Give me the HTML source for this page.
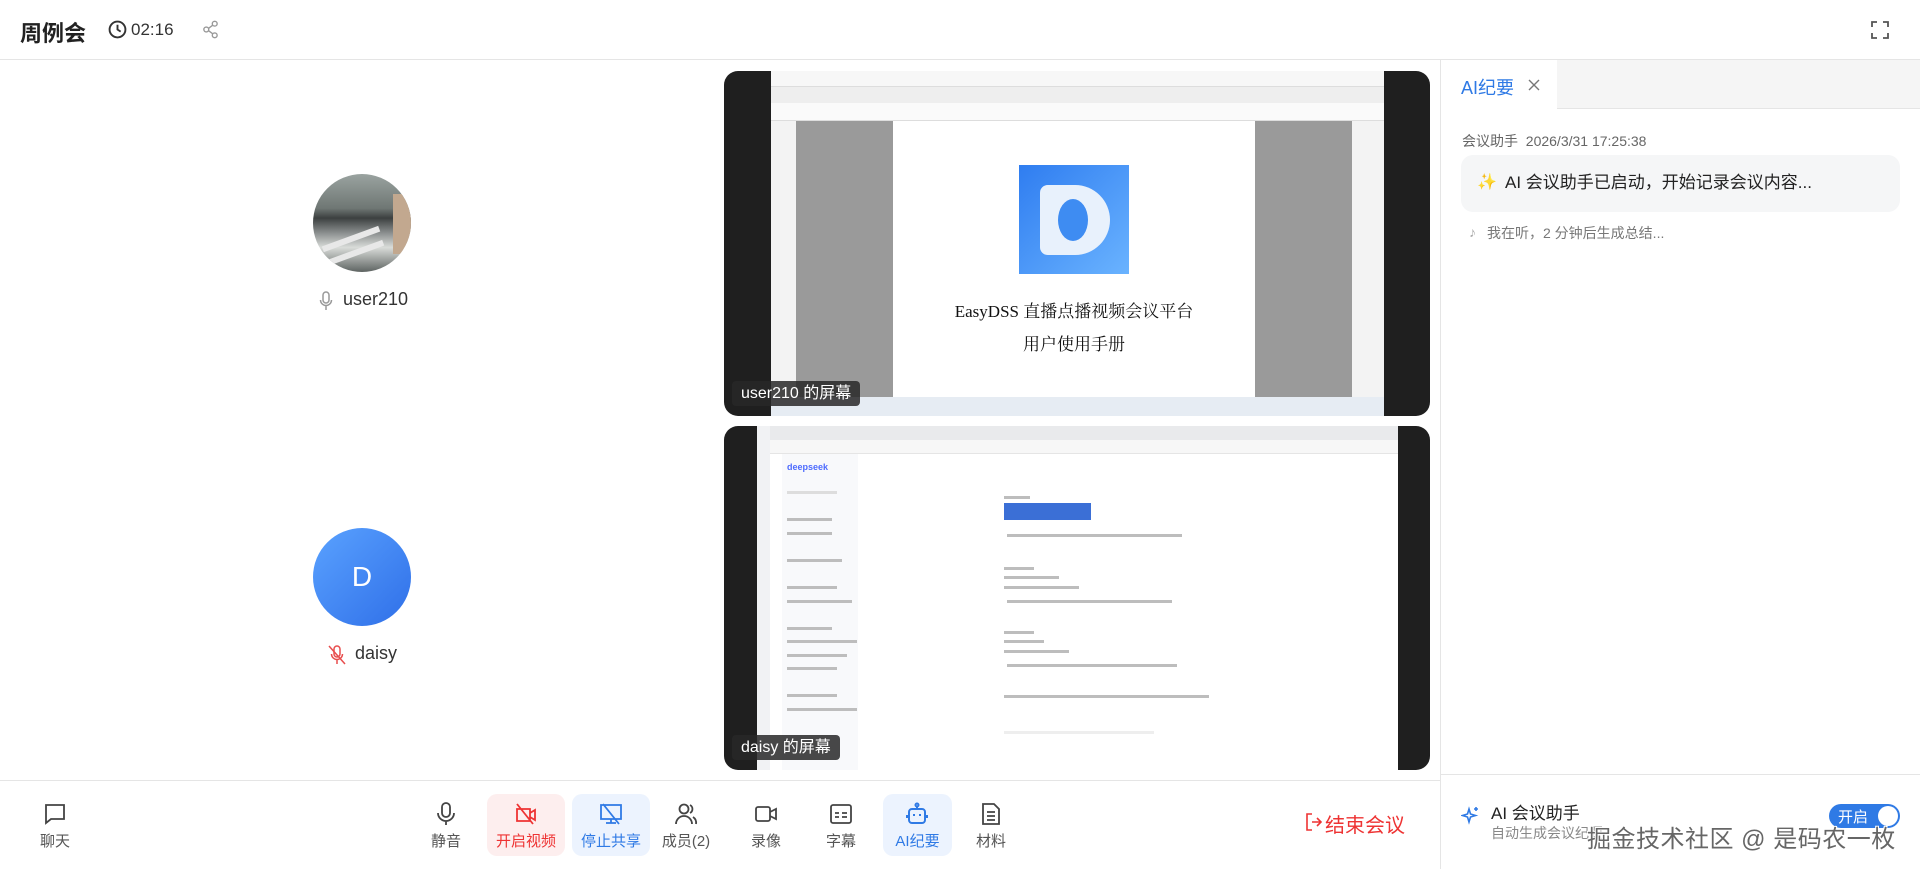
<!DOCTYPE html>
<html><head><meta charset="utf-8"><style>
*{box-sizing:border-box;margin:0;padding:0}
body{width:1920px;height:869px;overflow:hidden;background:#fff;font-family:"Liberation Sans","Noto Sans CJK SC",sans-serif;color:#222;position:relative}
.abs{position:absolute}
.hdr{left:0;top:0;width:1920px;height:60px;border-bottom:1px solid #e5e5e5}
.tb{position:absolute;top:794px;width:78px;height:62px;border-radius:10px;text-align:center}
.tb svg{position:absolute;left:27px;top:8px}
.tb span{position:absolute;left:0;right:0;top:36px;font-size:15px;color:#555}
.screen{position:absolute;left:724px;width:706px;background:#1f1f1f;border-radius:14px;overflow:hidden}
.lbl{position:absolute;left:8px;background:rgba(40,40,40,.85);color:#fff;font-size:16px;padding:0 9px;height:25px;line-height:25px;border-radius:4px;white-space:nowrap}
.ln{position:absolute;height:3px;background:#bdbdbd}
</style></head><body>
<div class="abs hdr"></div>
<div class="abs" style="left:20px;top:16px;font-size:22px;font-weight:bold;color:#222">周例会</div>
<svg class="abs" style="left:108px;top:20px" width="19" height="19" viewBox="0 0 18 18"><circle cx="9" cy="9" r="7.5" fill="none" stroke="#333" stroke-width="1.8"/><path d="M9 4.5V9l3 2" fill="none" stroke="#333" stroke-width="1.8"/></svg>
<div class="abs" style="left:131px;top:20px;font-size:17px;color:#333">02:16</div>
<svg class="abs" style="left:202px;top:20px" width="17" height="19" viewBox="0 0 16 18"><circle cx="12" cy="3.5" r="2.3" fill="none" stroke="#999" stroke-width="1.3"/><circle cx="4" cy="9" r="2.3" fill="none" stroke="#999" stroke-width="1.3"/><circle cx="12" cy="14.5" r="2.3" fill="none" stroke="#999" stroke-width="1.3"/><path d="M6 8L10 5M6 10l4 3" stroke="#999" stroke-width="1.3"/></svg>
<svg class="abs" style="left:1871px;top:21px" width="18" height="18" viewBox="0 0 18 18" fill="none" stroke="#555" stroke-width="1.8"><path d="M1 6V1h5M12 1h5v5M17 12v5h-5M6 17H1v-5"/></svg>

<div class="abs" style="left:313px;top:174px;width:98px;height:98px;border-radius:50%;overflow:hidden;background:linear-gradient(180deg,#9aa3a0 0%,#6f7774 35%,#3c4040 45%,#8a8e8e 60%,#d9dcd9 75%,#5e6462 100%)">
<div style="position:absolute;left:8px;top:62px;width:60px;height:6px;background:#e8e8e8;transform:rotate(-20deg)"></div>
<div style="position:absolute;left:12px;top:76px;width:60px;height:6px;background:#e8e8e8;transform:rotate(-20deg)"></div>
<div style="position:absolute;left:80px;top:20px;width:18px;height:60px;background:#c2a88f"></div></div>
<svg class="abs" style="left:319px;top:291px" width="14" height="20" viewBox="0 0 14 20" fill="none" stroke="#999" stroke-width="1.5"><rect x="4" y="1" width="6" height="11" rx="3"/><path d="M1.5 9a5.5 5.5 0 0 0 11 0M7 15v4"/></svg>
<div class="abs" style="left:343px;top:289px;font-size:18px;color:#333">user210</div>

<div class="abs" style="left:313px;top:528px;width:98px;height:98px;border-radius:50%;background:linear-gradient(135deg,#5aa2ff,#2f6fe8);color:#fff;font-size:28px;text-align:center;line-height:98px">D</div>
<svg class="abs" style="left:328px;top:645px" width="18" height="20" viewBox="0 0 18 20" fill="none" stroke="#e84d4d" stroke-width="1.5"><rect x="6" y="1" width="6" height="11" rx="3"/><path d="M3.5 9a5.5 5.5 0 0 0 11 0M9 15v4M1 1l16 18"/></svg>
<div class="abs" style="left:355px;top:643px;font-size:18px;color:#333">daisy</div>

<div class="screen" style="top:71px;height:345px">
 <div class="abs" style="left:47px;top:0;width:613px;height:345px;background:#f3f3f3">
  <div class="abs" style="left:0;top:0;width:613px;height:16px;background:#f7f7f7;border-bottom:1px solid #ddd"></div>
  <div class="abs" style="left:0;top:16px;width:613px;height:16px;background:#eee"></div>
  <div class="abs" style="left:0;top:32px;width:613px;height:18px;background:#fafafa;border-bottom:1px solid #ddd"></div>
  <div class="abs" style="left:25px;top:50px;width:97px;height:276px;background:#9a9a9a"></div>
  <div class="abs" style="left:484px;top:50px;width:97px;height:276px;background:#9a9a9a"></div>
  <div class="abs" style="left:122px;top:50px;width:362px;height:276px;background:#fff">
   <div class="abs" style="left:126px;top:44px;width:110px;height:109px;background:linear-gradient(135deg,#2f7df0,#6ab3ff)">
    <div class="abs" style="left:21px;top:20px;width:70px;height:70px;background:#e8f1fc;border-radius:8px 36px 36px 8px"></div>
    <div class="abs" style="left:39px;top:34px;width:30px;height:42px;background:#3e8cf2;border-radius:50%"></div>
   </div>
   <div class="abs" style="left:0;width:362px;top:176px;text-align:center;font-family:'Liberation Serif','Noto Serif CJK SC',serif;font-size:17px;color:#111">EasyDSS 直播点播视频会议平台</div>
   <div class="abs" style="left:0;width:362px;top:209px;text-align:center;font-family:'Liberation Serif','Noto Serif CJK SC',serif;font-size:17px;color:#111">用户使用手册</div>
  </div>
  <div class="abs" style="left:0;top:326px;width:613px;height:19px;background:#e6ecf3"></div>
 </div>
 <div class="lbl" style="top:310px">user210 的屏幕</div>
</div>

<div class="screen" style="top:426px;height:344px">
 <div class="abs" style="left:33px;top:0;width:641px;height:344px;background:#fff">
  <div class="abs" style="left:0;top:0;width:641px;height:14px;background:#e9eaec"></div>
  <div class="abs" style="left:0;top:14px;width:641px;height:14px;background:#f7f7f7;border-bottom:1px solid #e5e5e5"></div>
  <div class="abs" style="left:0;top:0;width:13px;height:344px;background:#f1f2f4"></div>
  <div class="abs" style="left:25px;top:28px;width:76px;height:316px;background:#f8f9fb"></div>
  <div class="abs" style="left:30px;top:36px;font-size:9px;color:#4d6bfe;font-weight:bold">deepseek</div>
  <div class="abs" style="left:247px;top:77px;width:87px;height:17px;background:#3b6fd6"></div>
  <div class="ln" style="left:247px;top:70px;width:26px"></div>
  <div class="ln" style="left:250px;top:108px;width:175px"></div>
  <div class="ln" style="left:247px;top:141px;width:30px"></div>
  <div class="ln" style="left:247px;top:150px;width:55px"></div>
  <div class="ln" style="left:247px;top:160px;width:75px"></div>
  <div class="ln" style="left:250px;top:174px;width:165px"></div>
  <div class="ln" style="left:247px;top:205px;width:30px"></div>
  <div class="ln" style="left:247px;top:214px;width:40px"></div>
  <div class="ln" style="left:247px;top:224px;width:65px"></div>
  <div class="ln" style="left:250px;top:238px;width:170px"></div>
  <div class="ln" style="left:247px;top:269px;width:205px"></div>
  <div class="ln" style="left:247px;top:305px;width:150px;background:#eee"></div>
  <div class="ln" style="left:30px;top:65px;width:50px;background:#ddd"></div>
  <div class="ln" style="left:30px;top:92px;width:45px"></div>
  <div class="ln" style="left:30px;top:106px;width:45px"></div>
  <div class="ln" style="left:30px;top:133px;width:55px"></div>
  <div class="ln" style="left:30px;top:160px;width:50px"></div>
  <div class="ln" style="left:30px;top:174px;width:65px"></div>
  <div class="ln" style="left:30px;top:201px;width:45px"></div>
  <div class="ln" style="left:30px;top:214px;width:70px"></div>
  <div class="ln" style="left:30px;top:228px;width:60px"></div>
  <div class="ln" style="left:30px;top:241px;width:50px"></div>
  <div class="ln" style="left:30px;top:268px;width:50px"></div>
  <div class="ln" style="left:30px;top:282px;width:70px"></div>
 </div>
 <div class="lbl" style="top:309px">daisy 的屏幕</div>
</div>

<div class="abs" style="left:0;top:780px;width:1440px;height:1px;background:#e5e5e5"></div>
<div class="tb" style="left:16px"><svg width="24" height="24" viewBox="0 0 24 24" fill="none" stroke="#444" stroke-width="1.8"><path d="M3 3h18v14H8l-5 4z"/></svg><span>聊天</span></div>
<div class="tb" style="left:407px"><svg width="24" height="24" viewBox="0 0 24 24" fill="none" stroke="#444" stroke-width="1.8"><rect x="8" y="1" width="8" height="14" rx="4"/><path d="M4 11a8 8 0 0 0 16 0M12 19v4"/></svg><span>静音</span></div>
<div class="tb" style="left:487px;background:#fdeeee"><svg width="24" height="24" viewBox="0 0 24 24" fill="none" stroke="#e33" stroke-width="1.8"><path d="M3 7h13v12H3zM16 11l5-3v10l-5-3M3 2l16 20"/></svg><span style="color:#e33">开启视频</span></div>
<div class="tb" style="left:572px;background:#ecf3fe"><svg width="24" height="24" viewBox="0 0 24 24" fill="none" stroke="#2f7ae5" stroke-width="1.8"><path d="M2 3h20v14H2zM12 17v4M7 21h10M4 2l16 20"/></svg><span style="color:#2f7ae5">停止共享</span></div>
<div class="tb" style="left:647px"><svg width="24" height="24" viewBox="0 0 24 24" fill="none" stroke="#444" stroke-width="1.8"><circle cx="10" cy="7" r="4.5"/><path d="M2 22a8 8 0 0 1 16 0M16 3a4.5 4.5 0 0 1 0 8M19 15a7 7 0 0 1 3 7"/></svg><span>成员(2)</span></div>
<div class="tb" style="left:727px"><svg width="24" height="24" viewBox="0 0 24 24" fill="none" stroke="#444" stroke-width="1.8"><rect x="2" y="5" width="14" height="14" rx="2"/><path d="M16 10l6-3v10l-6-3"/></svg><span>录像</span></div>
<div class="tb" style="left:802px"><svg width="24" height="24" viewBox="0 0 24 24" fill="none" stroke="#444" stroke-width="1.8"><rect x="2" y="3" width="20" height="18" rx="2"/><path d="M6 11h4M13 11h5M6 15h4M13 15h5"/></svg><span>字幕</span></div>
<div class="tb" style="left:883px;width:69px;background:#ecf3fe"><svg style="left:22px" width="24" height="24" viewBox="0 0 24 24" fill="none" stroke="#2f7ae5" stroke-width="2"><circle cx="12" cy="3" r="1.5"/><path d="M12 4.5V7"/><rect x="4" y="7" width="16" height="14" rx="3"/><path d="M9 12v2M15 12v2M2 13v3M22 13v3"/></svg><span style="color:#2f7ae5">AI纪要</span></div>
<div class="tb" style="left:952px"><svg width="24" height="24" viewBox="0 0 24 24" fill="none" stroke="#444" stroke-width="1.8"><path d="M4 2h11l5 5v15H4zM8 10h8M8 14h8M8 18h8"/></svg><span>材料</span></div>
<svg class="abs" style="left:1306px;top:813px" width="16" height="18" viewBox="0 0 16 18" fill="none" stroke="#e33" stroke-width="1.6"><path d="M6 1H1v16h5M6 9h9M11 5l4 4-4 4"/></svg>
<div class="abs" style="left:1325px;top:809px;font-size:20px;color:#e33">结束会议</div>

<div class="abs" style="left:1440px;top:60px;width:1px;height:809px;background:#e5e5e5"></div>
<div class="abs" style="left:1441px;top:60px;width:479px;height:49px;background:#f5f5f5;border-bottom:1px solid #e5e5e5"></div>
<div class="abs" style="left:1441px;top:60px;width:116px;height:49px;background:#fff"></div>
<div class="abs" style="left:1461px;top:74px;font-size:18px;color:#2f7ae5">AI纪要</div>
<svg class="abs" style="left:1528px;top:79px" width="12" height="12" viewBox="0 0 12 12" stroke="#777" stroke-width="1.4"><path d="M1 1l10 10M11 1L1 11"/></svg>
<div class="abs" style="left:1462px;top:131px;font-size:14px;color:#666">会议助手&nbsp;&nbsp;2026/3/31 17:25:38</div>
<div class="abs" style="left:1461px;top:155px;width:439px;height:57px;background:#f5f6f7;border-radius:12px"></div>
<div class="abs" style="left:1477px;top:172px;font-size:16px;line-height:22px;color:#f0a040">✨</div>
<div class="abs" style="left:1505px;top:172px;font-size:17px;line-height:22px;color:#222">AI 会议助手已启动，开始记录会议内容...</div>
<div class="abs" style="left:1469px;top:224px;font-size:14px;color:#aaa">♪</div>
<div class="abs" style="left:1487px;top:223px;font-size:14px;color:#777">我在听，2 分钟后生成总结...</div>

<div class="abs" style="left:1441px;top:774px;width:479px;height:1px;background:#e5e5e5"></div>
<svg class="abs" style="left:1461px;top:806px" width="20" height="20" viewBox="0 0 20 20" fill="none" stroke="#2f7ae5" stroke-width="1.6"><path d="M8 3l1.5 5 5 1.5-5 1.5L8 16l-1.5-5-5-1.5 5-1.5zM15 1v4M13 3h4"/></svg>
<div class="abs" style="left:1491px;top:799px;font-size:17px;color:#222">AI 会议助手</div>
<div class="abs" style="left:1491px;top:823px;font-size:14px;color:#888">自动生成会议纪要</div>
<div class="abs" style="left:1829px;top:804px;width:71px;height:24px;border-radius:12px;background:#2f7ae5">
 <div class="abs" style="left:9px;top:2px;font-size:15px;color:#fff">开启</div>
 <div class="abs" style="left:49px;top:2px;width:20px;height:20px;border-radius:50%;background:#fff"></div>
</div>
<div class="abs" style="left:1587px;top:819px;font-size:24px;letter-spacing:0.5px;color:#666;text-shadow:-1px -1px 0 #fff,1px -1px 0 #fff,-1px 1px 0 #fff,1px 1px 0 #fff;white-space:nowrap">掘金技术社区 @ 是码农一枚</div>
</body></html>
